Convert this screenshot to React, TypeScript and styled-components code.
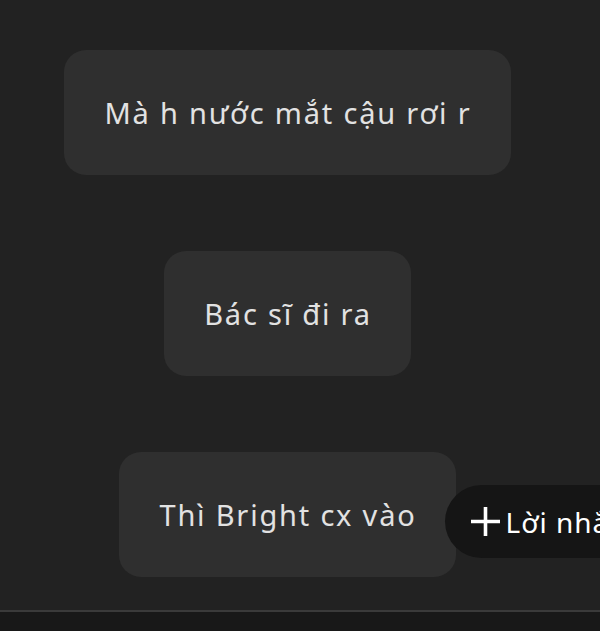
import React from 'react';
import styled, { createGlobalStyle } from 'styled-components';

const GlobalStyle = createGlobalStyle`
  html, body {
    margin: 0;
    padding: 0;
    background: #222222;
    overflow: hidden;
  }
  body {
    font-family: 'Noto Sans', 'Open Sans', sans-serif;
  }
`;

const Screen = styled.div`
  width: 600px;
  height: 631px;
  display: flex;
  flex-direction: column;
  background: #222222;
  overflow: hidden;
`;

const Feed = styled.div`
  flex: 1;
  width: 575px;
  display: flex;
  flex-direction: column;
  align-items: center;
  gap: 76px;
  padding-top: 50px;
  box-sizing: border-box;
`;

const Row = styled.div`
  position: relative;
  display: flex;
  justify-content: center;
`;

const Bubble = styled.div`
  height: 125px;
  padding: 0 39px 0 40px;
  box-sizing: border-box;
  display: flex;
  align-items: center;
  background: #2f2f2f;
  border-radius: 22px;
  color: #e2e2e2;
  font-size: 29px;
  letter-spacing: 1.8px;
  white-space: nowrap;
`;

const Pill = styled.div`
  position: absolute;
  left: calc(100% - 11px);
  top: 33px;
  height: 73px;
  padding: 0 40px 0 25px;
  display: flex;
  align-items: center;
  gap: 5px;
  background: #151515;
  border-radius: 37px;
  color: #ffffff;
  font-size: 28px;
  letter-spacing: 1px;
  white-space: nowrap;
`;

const Plus = () => (
  <svg width="31" height="31" viewBox="0 0 31 31">
    <path d="M15.5 1v29M1 15.5h29" stroke="#ffffff" strokeWidth="3.6" />
  </svg>
);

const BottomBar = styled.div`
  height: 19px;
  border-top: 2px solid #3a3a3a;
  background: #181818;
`;

const App = () => {
  return (
    <Screen>
      <GlobalStyle />
      <Feed>
        <Row>
          <Bubble>Mà h nước mắt cậu rơi r</Bubble>
        </Row>
        <Row>
          <Bubble>Bác sĩ đi ra</Bubble>
        </Row>
        <Row>
          <Bubble>Thì Bright cx vào</Bubble>
          <Pill>
            <Plus />
            Lời nhắn
          </Pill>
        </Row>
      </Feed>
      <BottomBar />
    </Screen>
  );
};

export default App;
